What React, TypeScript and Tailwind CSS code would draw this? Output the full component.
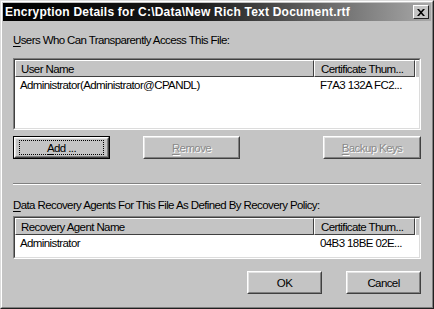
import type { ReactNode } from "react";

const font = { fontFamily: '"Liberation Sans", Arial, sans-serif' };

function Underlined({ text, at }: { text: string; at: number }) {
  return (
    <>
      {text.slice(0, at)}
      <span className="underline underline-offset-[2px]">{text[at]}</span>
      {text.slice(at + 1)}
    </>
  );
}

function Button({
  children,
  width,
  disabled,
  isDefault,
}: {
  children: ReactNode;
  width: string;
  disabled?: boolean;
  isDefault?: boolean;
}) {
  const face = (
    <div className="h-full w-full border border-t-white border-l-white border-r-[#404040] border-b-[#404040]">
      <div className="flex h-full w-full items-center justify-center border border-t-[#e4e4e4] border-l-[#e4e4e4] border-r-[#808080] border-b-[#808080]">
        {isDefault ? (
          <div className="flex h-[15px] w-[calc(100%-6px)] items-center justify-center border border-dotted border-black">
            {children}
          </div>
        ) : (
          <span
            className={
              disabled
                ? "text-[#8a8a8a] [text-shadow:1px_1px_0_#ffffff]"
                : "text-black"
            }
          >
            {children}
          </span>
        )}
      </div>
    </div>
  );
  return (
    <div className={`${width} h-[23px] shrink-0`}>
      {isDefault ? (
        <div className="h-full w-full border border-black">{face}</div>
      ) : (
        face
      )}
    </div>
  );
}

function ListBox({
  height,
  col1,
  col2,
  row1,
  row2,
}: {
  height: string;
  col1: string;
  col2: string;
  row1: string;
  row2: string;
}) {
  return (
    <div
      className={`${height} w-full border border-t-[#808080] border-l-[#808080] border-r-white border-b-white`}
    >
      <div className="h-full w-full overflow-hidden whitespace-nowrap border border-t-[#404040] border-l-[#404040] border-r-[#dcdcdc] border-b-[#dcdcdc] bg-white">
        <div className="flex h-[17px] bg-[#c4c4c4]">
          <div className="flex w-[299px] shrink-0 items-center border border-t-white border-l-white border-r-[#404040] border-b-[#404040] pl-[5px]">
            {col1}
          </div>
          <div className="flex w-[101px] shrink-0 items-center border border-t-white border-l-white border-r-[#404040] border-b-[#404040] pl-[6px]">
            {col2}
          </div>
          <div className="flex-1 border-t border-l border-t-white border-l-white" />
        </div>
        <div className="flex h-[15px] items-center">
          <div className="w-[299px] shrink-0 pl-[5px]">{row1}</div>
          <div className="pl-[6px]">{row2}</div>
        </div>
      </div>
    </div>
  );
}

export default function App() {
  return (
    <div
      className="h-[309px] w-[434px] text-[11.5px] leading-[14px] tracking-[-0.6px] text-black"
      style={font}
    >
      <div className="h-full w-full border border-t-[#dcdcdc] border-l-[#dcdcdc] border-r-[#202020] border-b-[#202020]">
        <div className="flex h-full w-full flex-col border border-t-white border-l-white border-r-[#808080] border-b-[#808080] bg-[#c4c4c4] p-px">
          <div className="flex h-[18px] items-center justify-between bg-[linear-gradient(to_right,#000000_0%,#1a1a1a_45%,#a8a8a8_100%)] pl-[2px] pr-[2px]">
            <span className="text-[12px] font-bold tracking-[0.22px] text-white">
              Encryption Details for C:\Data\New Rich Text Document.rtf
            </span>
            <div className="flex h-[14px] w-[16px] items-center justify-center border border-t-white border-l-white border-r-[#202020] border-b-[#202020] bg-[#c4c4c4]">
              <svg width="8" height="7" viewBox="0 0 8 7">
                <path
                  d="M0 0h2l2 2.2L6 0h2L5 3.5 8 7H6L4 4.8 2 7H0l3-3.5z"
                  fill="#000"
                />
              </svg>
            </div>
          </div>

          <div className="flex flex-1 flex-col px-[10px]">
            <div className="mt-[12px]">
              <Underlined text="Users Who Can Transparently Access This File:" at={0} />
            </div>
            <div className="mt-[11px]">
              <ListBox
                height="h-[72px]"
                col1="User Name"
                col2="Certificate Thum..."
                row1="Administrator(Administrator@CPANDL)"
                row2="F7A3 132A FC2..."
              />
            </div>

            <div className="mt-[6px] flex">
              <Button width="w-[97px]" isDefault>
                <Underlined text="Add ..." at={0} />
              </Button>
              <div className="ml-[33px]">
                <Button width="w-[97px]" disabled>
                  <Underlined text="Remove" at={0} />
                </Button>
              </div>
              <div className="ml-auto">
                <Button width="w-[98px]" disabled>
                  <Underlined text="Backup Keys" at={0} />
                </Button>
              </div>
            </div>

            <div className="mt-[24px] h-[2px] border-t border-b border-t-[#808080] border-b-white" />

            <div className="mt-[13px]">
              <Underlined
                text="Data Recovery Agents For This File As Defined By Recovery Policy:"
                at={0}
              />
            </div>
            <div className="mt-[4px]">
              <ListBox
                height="h-[43px]"
                col1="Recovery Agent Name"
                col2="Certificate Thum..."
                row1="Administrator"
                row2="04B3 18BE 02E..."
              />
            </div>

            <div className="mt-[12px] flex justify-end gap-[24px]">
              <Button width="w-[75px]">OK</Button>
              <Button width="w-[75px]">Cancel</Button>
            </div>
          </div>
        </div>
      </div>
    </div>
  );
}
